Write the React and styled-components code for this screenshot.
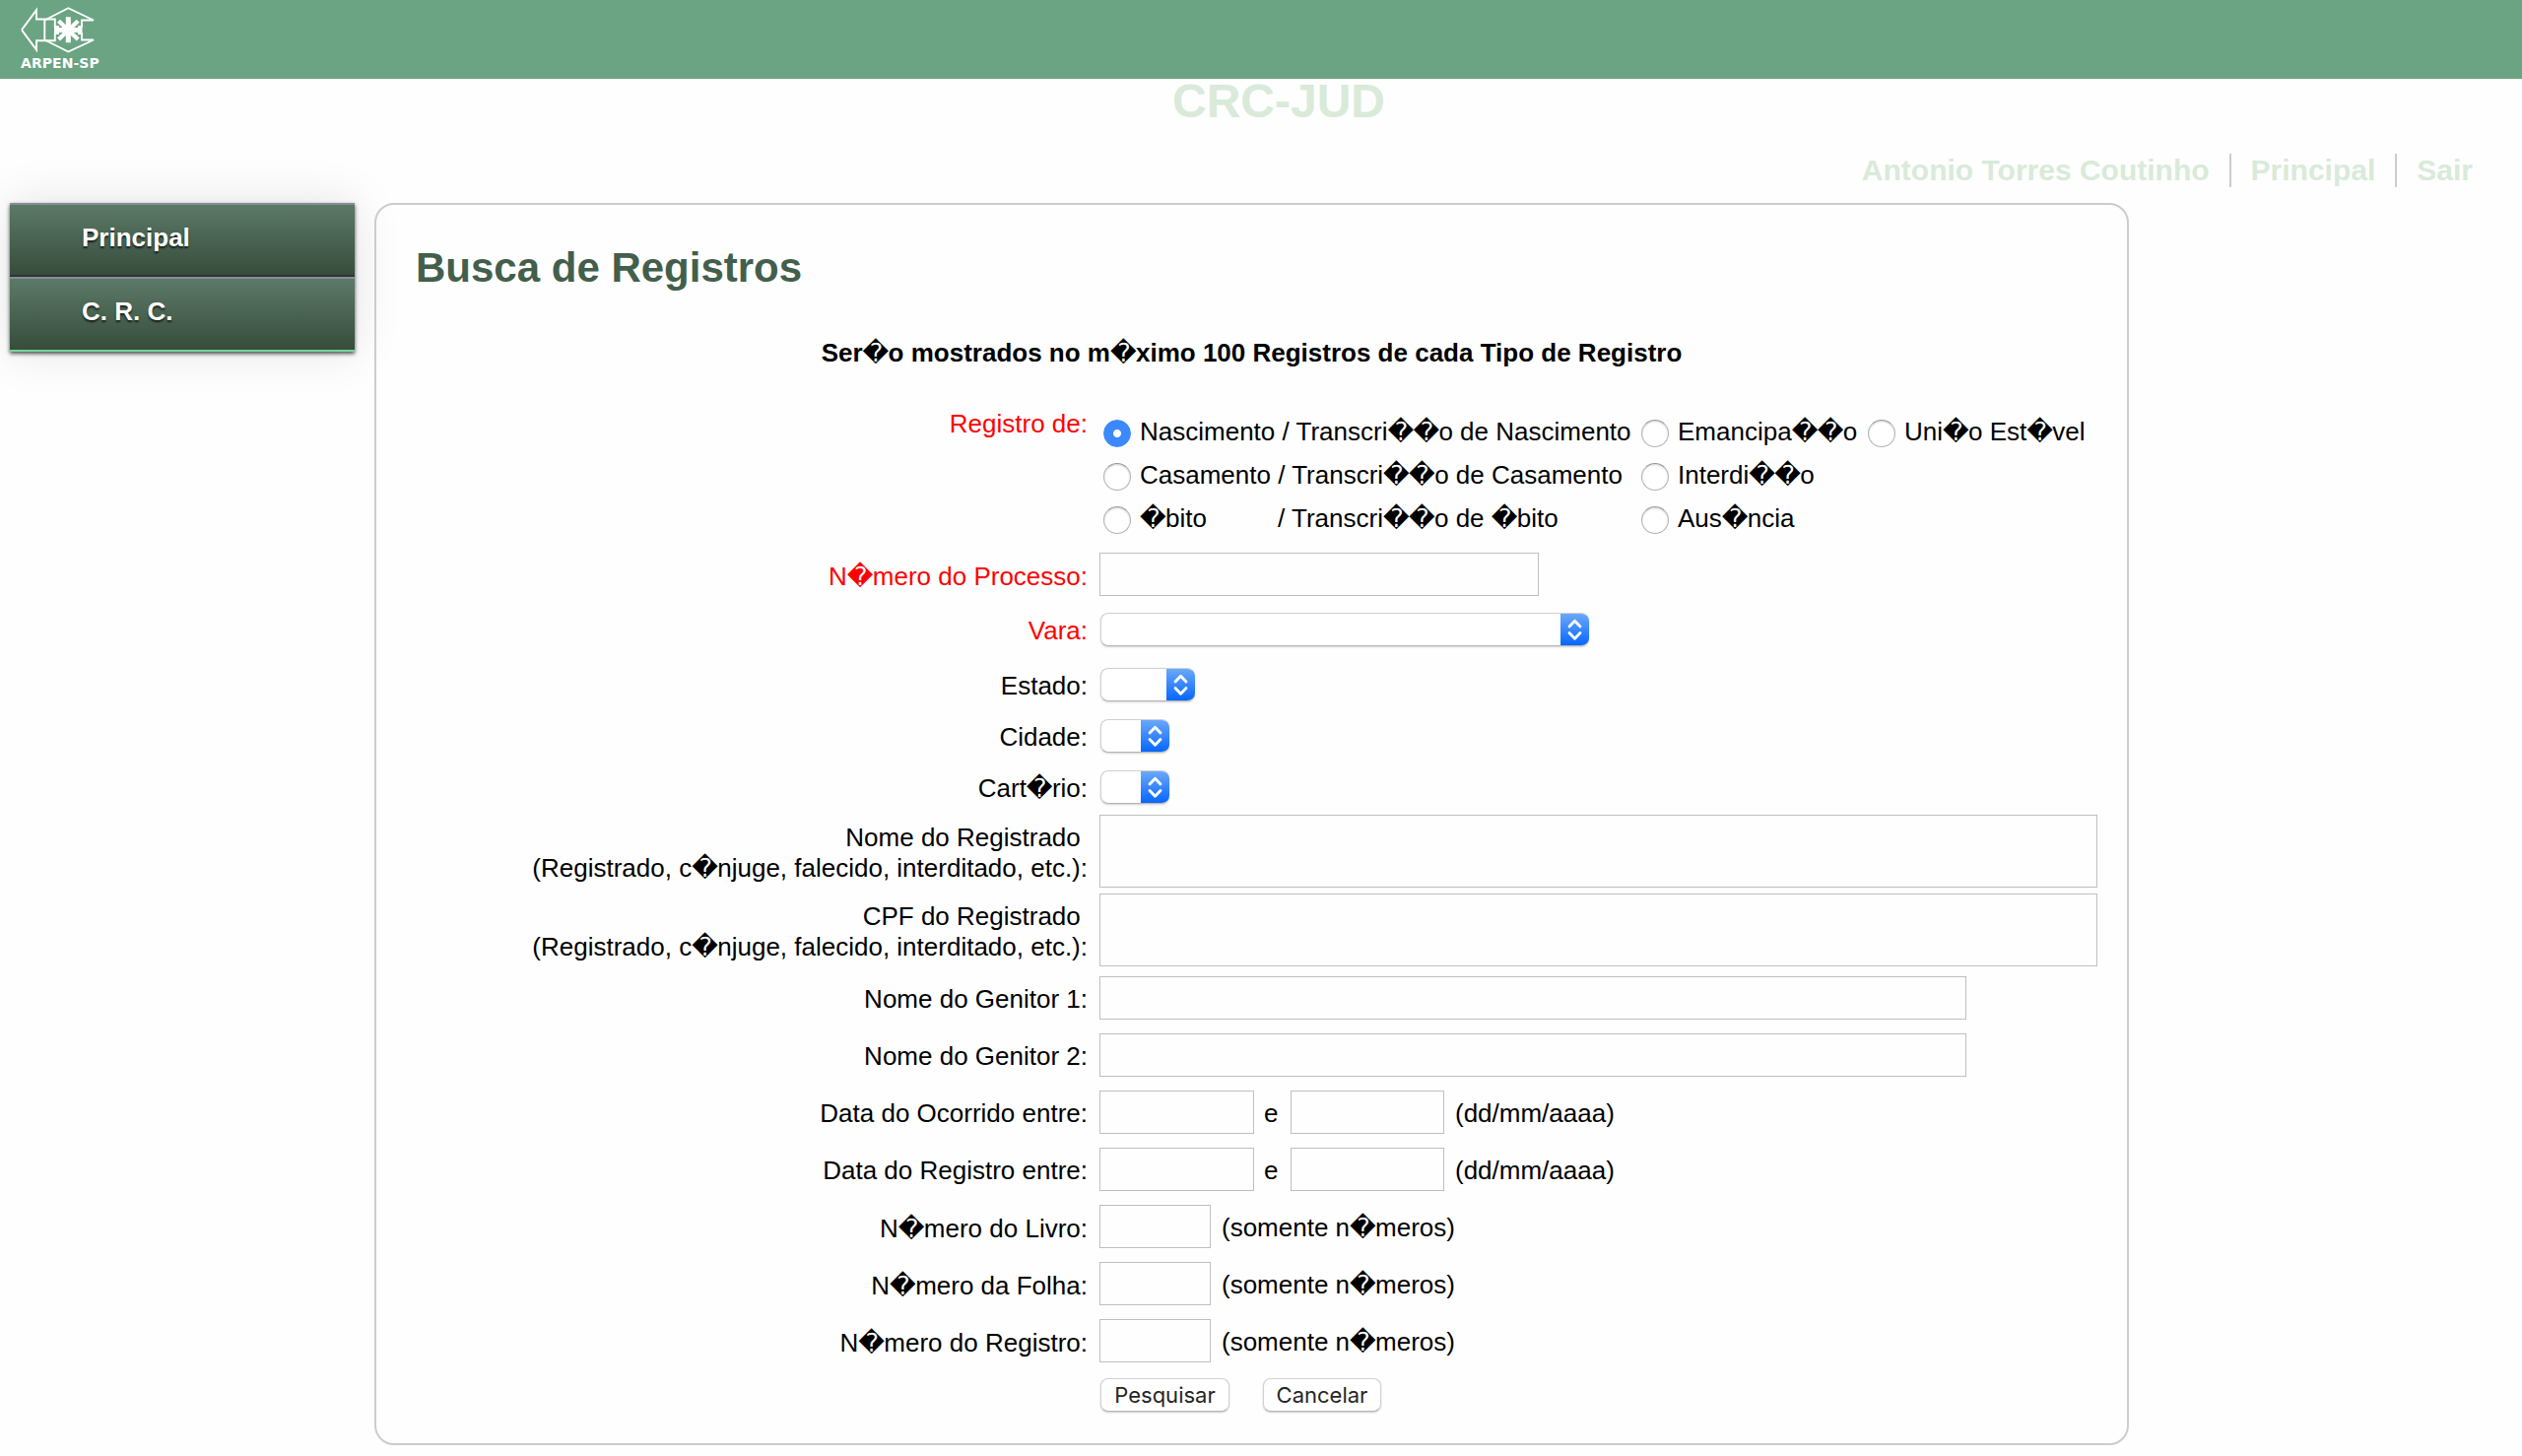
import React from "react";
import styled, { createGlobalStyle, css } from "styled-components";

const GlobalStyle = createGlobalStyle`
  * { box-sizing: border-box; }
  body {
    margin: 0;
    background: #fefefe;
    color: #000;
    font-family: "Liberation Sans", Arial, Helvetica, sans-serif;
    font-size: 26px;
    line-height: 30px;
  }
`;

const Header = styled.header`
  height: 80px;
  padding: 6px 0 0 20px;
  background: #6ba482;
`;

const Brand = styled.a`
  display: flex;
  flex-direction: column;
  width: 80px;
  color: #fff;
`;

const BrandMark = styled.svg`
  display: block;
  width: 80px;
  height: 49px;
`;

const BrandName = styled.span`
  padding-left: 1px;
  font: bold 14px/18px "DejaVu Sans", Verdana, sans-serif;
  letter-spacing: 0.05px;
  white-space: nowrap;
`;

const SystemTitle = styled.h1`
  height: 64px;
  margin: 0;
  padding-left: 36px;
  color: #d9ead9;
  font-size: 48px;
  line-height: 46px;
  text-align: center;
`;

const UserNav = styled.nav`
  display: flex;
  justify-content: flex-end;
  height: 62px;
  padding: 12px 30px 0 0;
`;

const UserLink = styled.a`
  height: 34px;
  padding: 0 20px;
  color: #d9ead9;
  font-size: 30px;
  font-weight: bold;
  line-height: 34px;
  & + & { border-left: 2px solid #ccc; }
`;

const Body = styled.div`
  display: flex;
  align-items: flex-start;
  gap: 20px;
  padding-left: 10px;
`;

const Sidebar = styled.nav`
  width: 350px;
  box-shadow: 0 2px 4px rgba(0, 0, 0, 0.7), 0 0 46px rgba(0, 0, 0, 0.11);
`;

const SidebarItem = styled.a`
  display: block;
  height: ${(p) => (p.$last ? 76 : 75)}px;
  padding: 18px 0 0 73px;
  border-top: 2px solid #878c99;
  border-bottom: 2px solid ${(p) => (p.$last ? "#75d69c" : "#2e3338")};
  background: linear-gradient(#5c7967, #374d3c);
  color: #fff;
  font-weight: bold;
  text-shadow: 0 2px 2px rgba(0, 0, 0, 0.7);
`;

const Panel = styled.main`
  width: 1781px;
  height: 1261px;
  padding: 39px 0 0;
  border: 2px solid #ccc;
  border-radius: 20px;
`;

const Heading = styled.h2`
  margin: 0;
  padding-left: 40px;
  color: #435f4c;
  font-size: 42px;
  line-height: 50px;
`;

const Notice = styled.p`
  margin: 46px 0 42px;
  font-weight: bold;
  text-align: center;
`;

const Row = styled.div`
  display: grid;
  grid-template-columns: 722px 1fr;
  column-gap: 12px;
  align-items: start;
  height: ${(p) => p.$h}px;
`;

const Label = styled.label`
  padding-top: ${(p) => p.$top}px;
  color: ${(p) => (p.$required ? "#f00" : "#000")};
  line-height: ${(p) => (p.$tall ? 31 : 30)}px;
  text-align: right;
  white-space: pre;
`;

const Fields = styled.div`
  display: flex;
  align-items: flex-start;
`;

const box = css`
  display: block;
  margin: 0;
  border: 1px solid #bfbfbf;
  border-radius: 0;
  outline: none;
  background: #fefefe;
  font: 22px/26px "Liberation Sans", Arial, sans-serif;
`;

const TextField = styled.input`
  ${box}
  width: ${(p) => p.$w}px;
  height: 44px;
`;

const TextArea = styled.textarea`
  ${box}
  width: 1013px;
  height: 74px;
  resize: none;
`;

const Hint = styled.span`
  padding: 8px 11px 0;
  white-space: nowrap;
`;

const Between = styled.span`
  width: 37px;
  padding: 8px 0 0 10px;
`;

const SelectBox = styled.div`
  display: flex;
  justify-content: flex-end;
  width: ${(p) => p.$w}px;
  height: 34px;
  margin-left: 1px;
  border-radius: 8px;
  overflow: hidden;
  background: #fff;
  border: 1px solid #d0d0d0;
  border-bottom-color: #b5b5b5;
  border-right: 0;
  box-shadow: 0 1px 2px rgba(0, 0, 0, 0.18);
`;

const Stepper = styled.svg`
  width: 29px;
  height: 34px;
  margin-top: -1px;
  flex: none;
  background: linear-gradient(#6daafb, #3a87fd 50%, #0265fe);
`;

const Options = styled.div`
  display: grid;
  grid-template-columns: 546px 230px 1fr;
  grid-auto-rows: 44px;
  padding: 1px 0 0 4px;
`;

const Option = styled.label`
  grid-column: ${(p) => p.$col};
  display: flex;
  align-items: center;
  gap: 9px;
  white-space: pre;
`;

const Radio = styled.input`
  appearance: none;
  width: 28px;
  height: 28px;
  margin: 4px 0 0;
  border: 1px solid #b4b4b4;
  border-top-color: #999;
  border-radius: 50%;
  background: #fff;
  box-shadow: inset 0 1px 2px rgba(0, 0, 0, 0.18);
  &:checked {
    border-color: #3b89fc;
    background: radial-gradient(circle, #fff 0 3.6px, #3b89fc 4.4px);
    box-shadow: none;
  }
`;

const OptionName = styled.span`
  display: inline-block;
  min-width: ${(p) => p.$w || 0}px;
`;

const Button = styled.button`
  width: ${(p) => p.$w}px;
  height: 34px;
  margin: 0 33px 0 1px;
  padding: 0;
  border: 1px solid #d2d2d2;
  border-bottom-color: #b5b5b5;
  border-radius: 8px;
  background: #fff;
  box-shadow: 0 1px 2px rgba(0, 0, 0, 0.2);
  color: #262626;
  font: 22px/32px Inter, sans-serif;
`;

const Replacement = styled.span`
  font-family: "DejaVu Sans", sans-serif;
  font-weight: normal;
  letter-spacing: -0.65px;
  line-height: 0;
`;

function Text({ children }) {
  return children
    .split(/(\uFFFD)/)
    .map((part, i) => (part === "\uFFFD" ? <Replacement key={i}>{part}</Replacement> : part));
}

function Select({ width }) {
  return (
    <SelectBox $w={width}>
      <Stepper viewBox="0 0 29 34" fill="none" stroke="#fff" strokeWidth="2.8" strokeLinecap="round" strokeLinejoin="round">
        <path d="M9 14 14.5 8.2 20 14M9 20.5 14.5 26.3 20 20.5" />
      </Stepper>
    </SelectBox>
  );
}

function FormRow({ label, height, top = 8, required, tall, children }) {
  return (
    <Row $h={height}>
      <Label $top={top} $required={required} $tall={tall}>
        <Text>{label || ""}</Text>
      </Label>
      <Fields>{children}</Fields>
    </Row>
  );
}

function RecordType({ col, checked, children }) {
  return (
    <Option $col={col}>
      <Radio type="radio" name="tipo" defaultChecked={checked} />
      <span>{children}</span>
    </Option>
  );
}

function Logo() {
  return (
    <BrandMark viewBox="20 6 80 49" fill="none" stroke="#fff" strokeWidth="1.9">
      <path d="M22 30.4 37 10.2V19.5H55.800V27H60" />
      <path d="M22 30.4 37 50.6V41.2H55.800V34H60" />
      <path d="M45.300 20.500 69.300 8.200 95 20.500H83V27H79" />
      <path d="M45.300 40.500 69.300 52.500 95 40.500H83V34H79" />
      <path d="M45.300 20V41" />
      <path d="M69.300 17.300V43.300M55 30.400H83.500" strokeWidth="5" />
      <path d="M59.500 21.200 79.200 40M79.200 21.200 59.500 40" strokeWidth="4.300" />
    </BrandMark>
  );
}

export default function App() {
  return (
    <>
      <GlobalStyle />
      <Header>
        <Brand>
          <Logo />
          <BrandName>ARPEN-SP</BrandName>
        </Brand>
      </Header>
      <SystemTitle>CRC-JUD</SystemTitle>
      <UserNav>
        <UserLink>Antonio Torres Coutinho</UserLink>
        <UserLink>Principal</UserLink>
        <UserLink>Sair</UserLink>
      </UserNav>
      <Body>
        <Sidebar>
          <SidebarItem>Principal</SidebarItem>
          <SidebarItem $last>C. R. C.</SidebarItem>
        </Sidebar>
        <Panel>
          <Heading>Busca de Registros</Heading>
          <Notice>
            <Text>{"Ser\uFFFDo mostrados no m\uFFFDximo 100 Registros de cada Tipo de Registro"}</Text>
          </Notice>

          <FormRow label="Registro de:" height={146} top={0} required>
            <Options>
              <RecordType col={1} checked>
                <Text>{"Nascimento / Transcri\uFFFD\uFFFDo de Nascimento"}</Text>
              </RecordType>
              <RecordType col={2}><Text>{"Emancipa\uFFFD\uFFFDo"}</Text></RecordType>
              <RecordType col={3}><Text>{"Uni\uFFFDo Est\uFFFDvel"}</Text></RecordType>
              <RecordType col={1}>
                <Text>{"Casamento / Transcri\uFFFD\uFFFDo de Casamento"}</Text>
              </RecordType>
              <RecordType col={2}><Text>{"Interdi\uFFFD\uFFFDo"}</Text></RecordType>
              <RecordType col={1}>
                <OptionName $w={140}><Text>{"\uFFFDbito"}</Text></OptionName>
                <Text>{"/ Transcri\uFFFD\uFFFDo de \uFFFDbito"}</Text>
              </RecordType>
              <RecordType col={2}><Text>{"Aus\uFFFDncia"}</Text></RecordType>
            </Options>
          </FormRow>
          <FormRow label={"N\uFFFDmero do Processo:"} height={61} top={9} required>
            <TextField $w={446} />
          </FormRow>
          <FormRow label="Vara:" height={56} top={3} required><Select width={496} /></FormRow>
          <FormRow label="Estado:" height={52} top={3}><Select width={96} /></FormRow>
          <FormRow label="Cidade:" height={52} top={3}><Select width={70} /></FormRow>
          <FormRow label={"Cart\uFFFDrio:"} height={45} top={3}><Select width={70} /></FormRow>
          <FormRow label={"Nome do Registrado \n(Registrado, c\uFFFDnjuge, falecido, interditado, etc.):"} height={80} tall>
            <TextArea />
          </FormRow>
          <FormRow label={"CPF do Registrado \n(Registrado, c\uFFFDnjuge, falecido, interditado, etc.):"} height={84} tall>
            <TextArea />
          </FormRow>
          <FormRow label="Nome do Genitor 1:" height={58}><TextField $w={880} /></FormRow>
          <FormRow label="Nome do Genitor 2:" height={58}><TextField $w={880} /></FormRow>
          <FormRow label="Data do Ocorrido entre:" height={58}>
            <TextField $w={157} /><Between>e</Between><TextField $w={156} /><Hint>(dd/mm/aaaa)</Hint>
          </FormRow>
          <FormRow label="Data do Registro entre:" height={58}>
            <TextField $w={157} /><Between>e</Between><TextField $w={156} /><Hint>(dd/mm/aaaa)</Hint>
          </FormRow>
          <FormRow label={"N\uFFFDmero do Livro:"} height={58} top={9}>
            <TextField $w={113} /><Hint><Text>{"(somente n\uFFFDmeros)"}</Text></Hint>
          </FormRow>
          <FormRow label={"N\uFFFDmero da Folha:"} height={58} top={9}>
            <TextField $w={113} /><Hint><Text>{"(somente n\uFFFDmeros)"}</Text></Hint>
          </FormRow>
          <FormRow label={"N\uFFFDmero do Registro:"} height={60} top={9}>
            <TextField $w={113} /><Hint><Text>{"(somente n\uFFFDmeros)"}</Text></Hint>
          </FormRow>
          <FormRow height={34}>
            <Button $w={131}>Pesquisar</Button>
            <Button $w={120}>Cancelar</Button>
          </FormRow>
        </Panel>
      </Body>
    </>
  );
}
